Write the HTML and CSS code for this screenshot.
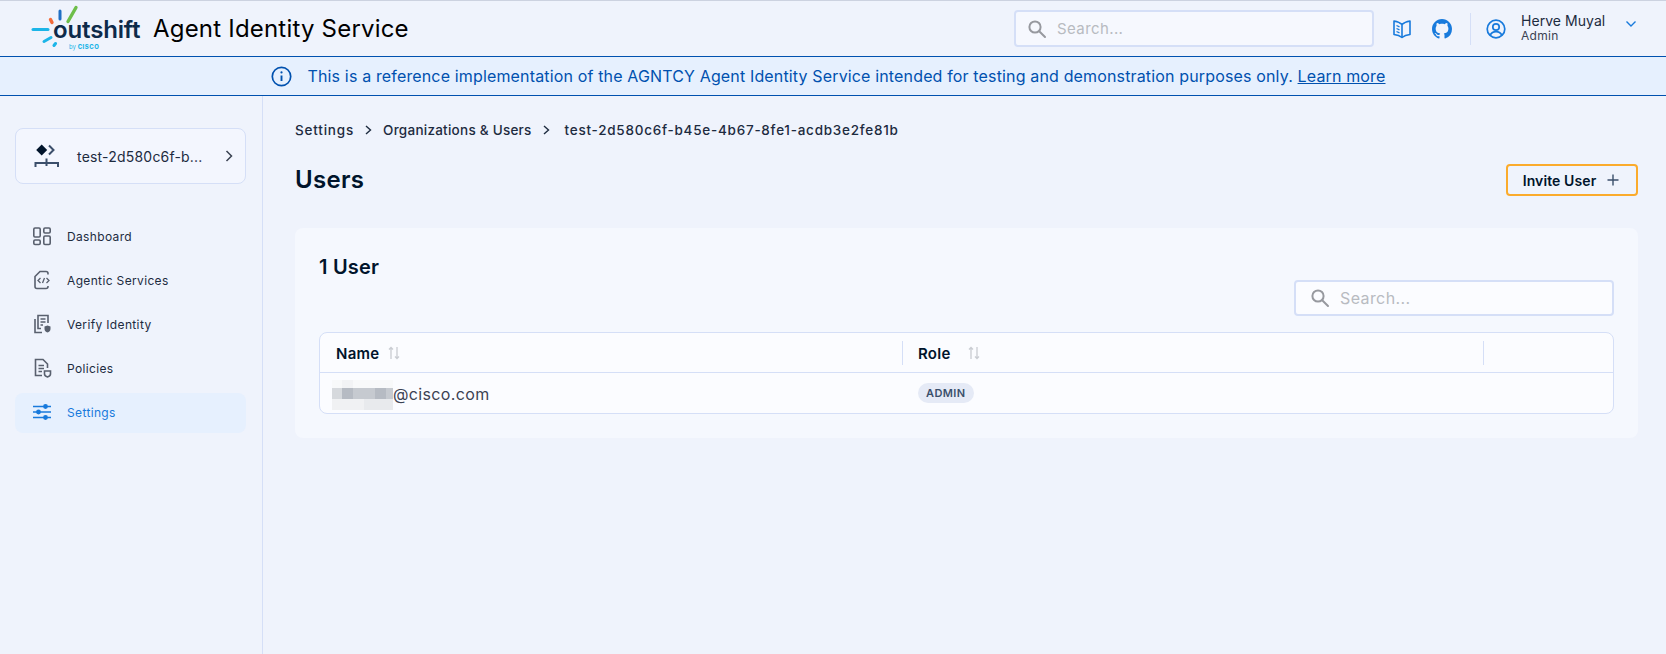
FILE: index.html
```html
<!DOCTYPE html>
<html lang="en">
<head>
<meta charset="utf-8">
<title>Agent Identity Service</title>
<link rel="stylesheet" href="styles.css">
</head>
<body>
<header class="topbar">
    <div class="brand">
        <div class="logo">
            <svg class="logo_rays" width="48" height="42" viewBox="0 0 48 42" fill="none" stroke-linecap="round">
                <path d="M2 24.5H17" stroke="#1cb5e8" stroke-width="3"/>
                <path d="M19.5 14.5L21 17.5" stroke="#f26b3a" stroke-width="3.4"/>
                <path d="M29 6V14" stroke="#1f6fc4" stroke-width="3"/>
                <path d="M37 16.5L45 2.5" stroke="#6ebe4a" stroke-width="3.4"/>
                <path d="M13 36.5L20 32.5" stroke="#1cb5e8" stroke-width="3"/>
                <path d="M23 40.5L24.5 38.5" stroke="#1cb5e8" stroke-width="3"/>
            </svg>
            <span class="logo_word">outshift</span>
            <span class="logo_by">by <b>CISCO</b></span>
        </div>
        <div class="app_name">Agent Identity Service</div>
    </div>
    <div class="top_right">
        <div class="search top_search">
            <svg width="20" height="20" viewBox="0 0 20 20" fill="none" stroke="#97999f" stroke-width="2"><circle cx="8" cy="8" r="5.6"/><path d="M12.2 12.2L18 18" stroke-linecap="round"/></svg>
            <span>Search...</span>
        </div>
        <svg class="top_icon" width="20" height="20" viewBox="0 0 20 20" fill="none" stroke="#187adc" stroke-width="1.6" stroke-linejoin="round"><path d="M10 5.5C8 3.5 5 2.5 2 2V15.5C5 15.8 8 16.8 10 18.5C12 16.8 15 15.8 18 15.5V2C15 2.5 12 3.5 10 5.5Z"/><path d="M10 5.5V18.5"/><path d="M4.5 6.5L7.5 7.8M4.5 9.5L7.5 10.8M4.5 12.5L7.5 13.8" stroke-width="1.3"/></svg>
        <svg class="top_icon github" width="20" height="20" viewBox="0 0 16 16" fill="#187adc"><path d="M8 0C3.58 0 0 3.58 0 8c0 3.54 2.29 6.53 5.47 7.59.4.07.55-.17.55-.38 0-.19-.01-.82-.01-1.49-2.01.37-2.53-.49-2.69-.94-.09-.23-.48-.94-.82-1.13-.28-.15-.68-.52-.01-.53.63-.01 1.08.58 1.23.82.72 1.21 1.87.87 2.33.66.07-.52.28-.87.51-1.07-1.78-.2-3.64-.89-3.64-3.95 0-.87.31-1.59.82-2.15-.08-.2-.36-1.02.08-2.12 0 0 .67-.21 2.2.82.64-.18 1.32-.27 2-.27s1.36.09 2 .27c1.53-1.04 2.2-.82 2.2-.82.44 1.1.16 1.92.08 2.12.51.56.82 1.27.82 2.15 0 3.07-1.87 3.75-3.65 3.95.29.25.54.73.54 1.48 0 1.07-.01 1.93-.01 2.2 0 .21.15.46.55.38A8.01 8.01 0 0 0 16 8c0-4.42-3.58-8-8-8z"/></svg>
        <div class="top_sep"></div>
        <svg class="user_icon" width="20" height="20" viewBox="0 0 20 20" fill="none" stroke="#187adc" stroke-width="1.7"><circle cx="10" cy="10" r="8.8"/><circle cx="10" cy="8" r="3.2"/><path d="M4.2 16.2C5.4 13.6 7.4 12.6 10 12.6S14.6 13.6 15.8 16.2"/></svg>
        <div class="user">
            <div class="user_name">Herve Muyal</div>
            <div class="user_role">Admin</div>
        </div>
        <svg class="user_caret" width="12" height="8" viewBox="0 0 12 8" fill="none" stroke="#187adc" stroke-width="1.4"><path d="M1.5 1.5L6 6L10.5 1.5"/></svg>
    </div>
</header>

<div class="banner">
    <svg width="21" height="21" viewBox="0 0 21 21" fill="none" stroke="#0051af" stroke-width="1.7"><circle cx="10.5" cy="10.5" r="9.2"/><path d="M10.5 9.5V15" stroke-width="1.9"/><circle cx="10.5" cy="6.4" r="1.1" fill="#0051af" stroke="none"/></svg>
    <span>This is a reference implementation of the AGNTCY Agent Identity Service intended for testing and demonstration purposes only. <a href="#">Learn more</a></span>
</div>

<div class="layout">
    <aside class="sidebar">
        <div class="org_card">
            <svg width="26" height="24" viewBox="0 0 26 24" fill="none"><path d="M7.7 0.5L13.2 6L7.7 11.5L2.2 6Z" fill="#00142b"/><path d="M15 1.5L19.5 6L15 10.5" stroke="#3b4f6b" stroke-width="2"/><path d="M1.5 23V19H24V23M12.5 14.5V22" stroke="#3b4f6b" stroke-width="2"/></svg>
            <span class="org_name">test-2d580c6f-b...</span>
            <svg width="8" height="12" viewBox="0 0 8 12" fill="none" stroke="#3b4252" stroke-width="1.5"><path d="M1.5 1L6.5 6L1.5 11"/></svg>
        </div>
        <nav class="nav">
            <a class="nav_item" href="#">
                <svg width="20" height="20" viewBox="0 0 20 20" fill="none" stroke="#59606e" stroke-width="1.6"><rect x="1.8" y="2" width="6.4" height="9" rx="1.2"/><rect x="11.8" y="2" width="6.4" height="5" rx="1.2"/><rect x="1.8" y="14" width="6.4" height="4.5" rx="1.2"/><rect x="11.8" y="10" width="6.4" height="8.5" rx="1.2"/></svg>
                Dashboard
            </a>
            <a class="nav_item" href="#">
                <svg width="20" height="20" viewBox="0 0 20 20" fill="none" stroke="#59606e" stroke-width="1.6"><path d="M16 4.5V3.5A2 2 0 0 0 14 1.5H8L3 6.5V16.5A2 2 0 0 0 5 18.5H14A2 2 0 0 0 16 16.5V16"/><path d="M8.5 8L6 10.5L8.5 13M14.5 8L17 10.5L14.5 13M12.5 8L10.5 13" stroke-width="1.3"/></svg>
                Agentic Services
            </a>
            <a class="nav_item" href="#">
                <svg width="20" height="20" viewBox="0 0 20 20" fill="none" stroke="#59606e" stroke-width="1.6"><path d="M3 5V18.5H10"/><path d="M9 14.5H6V1.5H16V9"/><path d="M8.5 5H13.5M8.5 8H13.5M8.5 11H11" stroke-width="1.3"/><path d="M12.5 12.5L15.5 11.5L18.5 12.5V15C18.5 16.6 17.2 18 15.5 18.5C13.8 18 12.5 16.6 12.5 15Z" fill="#59606e" stroke="none"/></svg>
                Verify Identity
            </a>
            <a class="nav_item" href="#">
                <svg width="20" height="20" viewBox="0 0 20 20" fill="none" stroke="#59606e" stroke-width="1.6"><path d="M10 17.5H3.5V1.5H11L15.5 6V10"/><path d="M6.5 7.5H12M6.5 10.5H12M6.5 13.5H10" stroke-width="1.3"/><path d="M12.5 13H18.5V16C18.5 17.5 17 18.5 15.5 19C14 18.5 12.5 17.5 12.5 16Z"/></svg>
                Policies
            </a>
            <a class="nav_item active" href="#">
                <svg width="20" height="20" viewBox="0 0 20 20" fill="#187adc" stroke="#187adc" stroke-width="1.6"><path d="M1 4.5H19M1 10H19M1 15.5H19"/><circle cx="13.5" cy="4.5" r="1.6"/><circle cx="6.5" cy="10" r="1.6"/><circle cx="13.5" cy="15.5" r="1.6"/></svg>
                Settings
            </a>
        </nav>
    </aside>

    <main class="content">
        <div class="crumbs">
            <span class="crumb_first">Settings</span>
            <svg width="7" height="10" viewBox="0 0 7 10" fill="none" stroke="#1d2b3f" stroke-width="1.4"><path d="M1 1L5.5 5L1 9"/></svg>
            <span>Organizations &amp; Users</span>
            <svg width="7" height="10" viewBox="0 0 7 10" fill="none" stroke="#1d2b3f" stroke-width="1.4"><path d="M1 1L5.5 5L1 9"/></svg>
            <span class="crumb_id">test-2d580c6f-b45e-4b67-8fe1-acdb3e2fe81b</span>
        </div>
        <div class="page_head">
            <h1>Users</h1>
            <button class="invite">Invite User
                <svg width="12" height="12" viewBox="0 0 12 12" fill="none" stroke="#3b4f6b" stroke-width="1.4"><path d="M6 0.5V11.5M0.5 6H11.5"/></svg>
            </button>
        </div>
        <section class="panel">
            <h2>1 User</h2>
            <div class="panel_tools">
                <div class="search panel_search">
                    <svg width="20" height="20" viewBox="0 0 20 20" fill="none" stroke="#97999f" stroke-width="2"><circle cx="8" cy="8" r="5.6"/><path d="M12.2 12.2L18 18" stroke-linecap="round"/></svg>
                    <span>Search...</span>
                </div>
            </div>
            <div class="table">
                <div class="row head_row">
                    <div class="cell col_name"><b>Name</b>
                        <svg class="sort" width="12" height="14" viewBox="0 0 12 14" fill="none" stroke="#c9ccd2" stroke-width="1.3"><path d="M3 13V1.5M1 3.5L3 1.5L5 3.5M9 1V12.5M7 10.5L9 12.5L11 10.5"/></svg>
                    </div>
                    <div class="cell col_role"><b>Role</b>
                        <svg class="sort" width="12" height="14" viewBox="0 0 12 14" fill="none" stroke="#c9ccd2" stroke-width="1.3"><path d="M3 13V1.5M1 3.5L3 1.5L5 3.5M9 1V12.5M7 10.5L9 12.5L11 10.5"/></svg>
                    </div>
                    <div class="cell col_end"></div>
                </div>
                <div class="row body_row">
                    <div class="cell col_name email">
                        <svg class="blur" width="61" height="30" viewBox="0 0 61 30" shape-rendering="crispEdges">
                            <rect y="0" width="61" height="8" fill="#f8f9fa"/>
                            <rect x="10" y="0" width="11" height="8" fill="#f2f3f5"/>
                            <rect y="8" width="61" height="11" fill="#c6cad0"/>
                            <rect x="0" y="8" width="10" height="11" fill="#d6d9dd"/>
                            <rect x="10" y="8" width="11" height="11" fill="#b6bbc3"/>
                            <rect x="43" y="8" width="11" height="11" fill="#b6bbc3"/>
                            <rect y="19" width="61" height="11" fill="#f0f1f3"/>
                            <rect x="32" y="19" width="29" height="11" fill="#e8eaed"/>
                        </svg>@cisco.com
                    </div>
                    <div class="cell col_role"><span class="badge">ADMIN</span></div>
                    <div class="cell col_end"></div>
                </div>
            </div>
        </section>
    </main>
</div>
</body>
</html>
```

FILE: styles.css
```css
* {box-sizing:border-box;}
html, body {height:100%;}
body {margin:0; background:#eff3fc; font-family:Inter, "Liberation Sans", sans-serif; color:#00142b; overflow:hidden;}

.topbar {height:57px; display:flex; justify-content:space-between; align-items:center; border-top:1px solid #ccd2e0; border-bottom:1px solid #0051af; padding:0 29px 0 31px;}
.brand {display:flex; align-items:center;}
.logo {position:relative; width:122px; height:48px;}
.logo_rays {position:absolute; left:0; top:0;}
.logo_word {position:absolute; left:22px; top:11px; font-size:24px; font-weight:600; letter-spacing:-0.15px; line-height:28px; color:#0d2a4a;}
.logo_by {position:absolute; left:38px; top:38px; font-size:6px; line-height:8px; color:#1cb5e8; white-space:nowrap;}
.logo_by b {font-weight:800; letter-spacing:0.5px;}
.app_name {font-size:24px; line-height:30px; letter-spacing:0.2px; color:#000;}

.top_right {display:flex; align-items:center;}
.search {display:flex; align-items:center; gap:10px; background:#f6f8fe; border:2px solid #d5dff7; border-radius:4px; color:#b8bbc1; letter-spacing:0.4px;}
.top_search {width:360px; height:37px; padding-left:11px; font-size:15px; margin-right:18px;}
.top_icon {display:block; margin-right:20px;}
.top_icon.github {width:20px; margin-right:18px;}
.top_sep {width:1px; height:32px; background:#d5dff7; margin-right:15px;}
.user_icon {margin-right:15px;}
.user {width:95px; margin-top:-2px;}
.user_name {font-size:14px; line-height:16px; color:#1d2b3f; letter-spacing:0.05px; white-space:nowrap;}
.user_role {font-size:12px; line-height:14px; color:#3b4252; letter-spacing:0.3px;}
.user_caret {margin:-10px 0 0 9px;}

.banner {height:39px; display:flex; justify-content:center; align-items:center; gap:16px; padding-right:10px; background:#e6f0fe; border-bottom:1px solid #0051af; color:#0051af; font-size:16px; letter-spacing:0.15px;}
.banner a {color:#0051af; text-decoration:underline;}

.layout {display:flex; height:calc(100% - 96px);}
.sidebar {width:263px; flex:none; border-right:1px solid #d5dff7; padding:32px 16px 0 15px;}
.org_card {height:56px; display:flex; align-items:center; padding:0 12px 0 18px; border:1px solid #d5dff7; border-radius:8px; background:#f3f6fe;}
.org_name {flex:1; margin-left:17px; font-size:14px; letter-spacing:0.2px; color:#1d2b3f; white-space:nowrap;}
.nav {margin-top:33px; display:flex; flex-direction:column; gap:4px;}
.nav_item {height:40px; display:flex; align-items:center; gap:15px; padding:0 0 2px 17px; font-size:12px; letter-spacing:0.35px; color:#1d2b3f; text-decoration:none; border-radius:8px;}
.nav_item.active {background:#e6f0fe; color:#187adc;}

.content {flex:1; padding:24px 28px 0 32px;}
.crumbs {display:flex; align-items:center; gap:11px; height:20px; font-size:13.5px; font-weight:500; color:#1d2b3f; letter-spacing:0.25px;}
.crumb_first {letter-spacing:0.8px;}
.crumb_id {margin-left:4px; letter-spacing:0.75px;}
.page_head {display:flex; justify-content:space-between; align-items:center; margin-top:24px; height:32px;}
h1 {margin:0; font-size:24px; font-weight:600; line-height:32px; letter-spacing:0.3px; color:#00142b;}
.invite {width:132px; height:32px; display:flex; align-items:center; justify-content:center; gap:11px; padding-right:8px; background:transparent; border:2px solid #fbab2c; border-radius:4px; font-family:inherit; font-size:14px; font-weight:600; color:#00142b; letter-spacing:0.1px;}

.panel {margin-top:32px; height:210px; background:#f5f8fe; border-radius:8px; padding:24px 24px 0 24px;}
h2 {margin:1px 0 -1px; font-size:20px; font-weight:600; line-height:28px; letter-spacing:0.2px; color:#00142b;}
.panel_tools {display:flex; justify-content:flex-end;}
.panel_search {width:320px; height:36px; padding-left:14px; font-size:16px; gap:10px; background:#fbfcff;}
.table {margin-top:16px; height:82px; background:#fbfcff; border:1px solid #d5dff7; border-radius:8px;}
.row {display:flex; align-items:center;}
.head_row {height:40px; border-bottom:1px solid #d5dff7;}
.body_row {height:40px;}
.cell {display:flex; align-items:center; height:100%;}
.col_name {width:582px; padding-left:16px;}
.col_role {width:581px; padding-left:16px;}
.col_end {flex:1;}
.head_row .cell {position:relative; padding-top:1px; font-size:15px; letter-spacing:0.25px; color:#00142b;}
.head_row .col_role::before, .head_row .col_end::before {content:""; position:absolute; left:0; top:8px; height:24px; width:1px; background:#d5dff7;}
.head_row b {font-weight:600;}
.sort {margin-left:9px;}
.head_row .col_role .sort {margin-left:17px;}
.email {padding:1px 0 0 12px; font-size:16px; letter-spacing:0.35px; color:#3b4252;}
.blur {display:block; margin-top:2px;}
.badge {display:block; height:20px; line-height:20px; padding:0 8px; background:#e5eaf6; border-radius:10px; font-size:11px; font-weight:600; letter-spacing:0.4px; color:#3b4f6b;}
```
